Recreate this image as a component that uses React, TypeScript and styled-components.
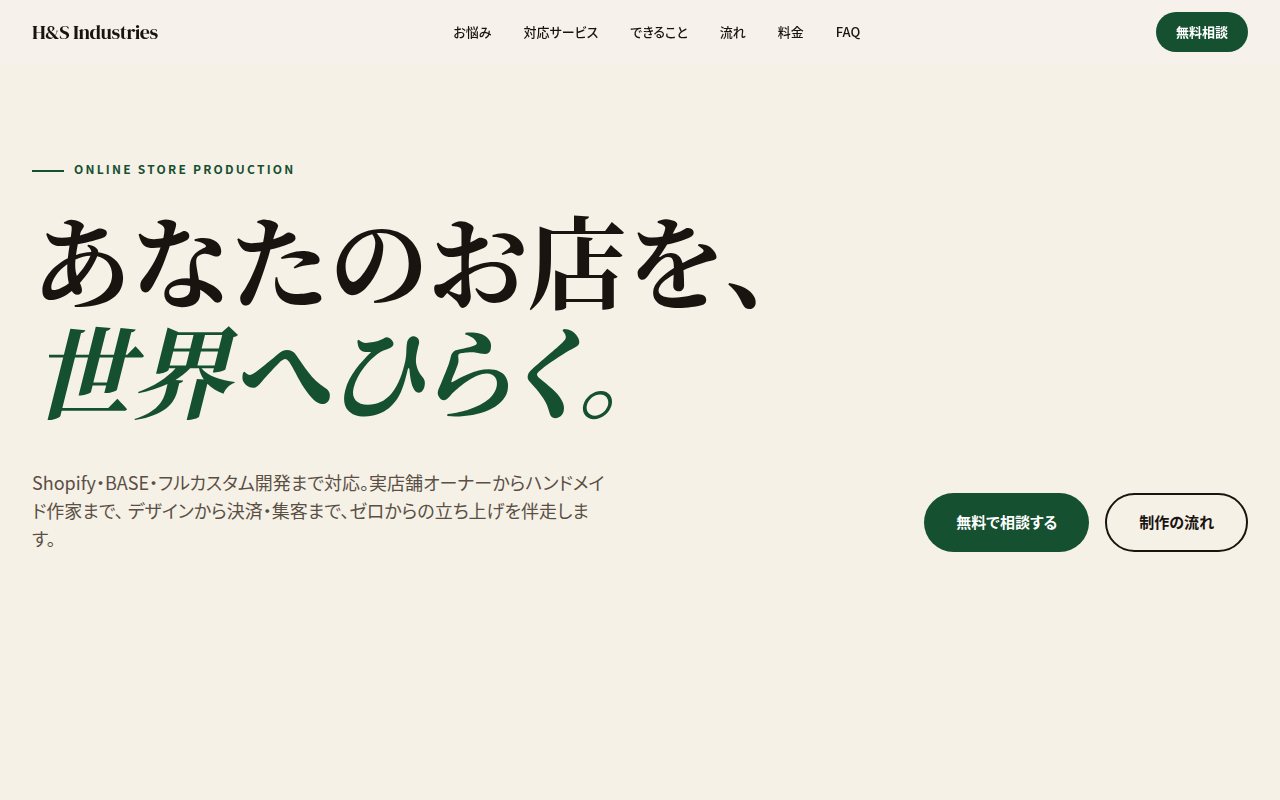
import React from "react";
import styled, { createGlobalStyle } from "styled-components";

const sans = `"Noto Sans CJK JP", sans-serif`;

const GlobalStyle = createGlobalStyle`
  *, *::before, *::after { box-sizing: border-box; }
  body {
    margin: 0;
    background: #f6f1e7;
    color: #1a1410;
    font-family: ${sans};
    font-feature-settings: "palt";
    line-height: 1.6;
  }
  a { color: inherit; text-decoration: none; }
`;

const Header = styled.header`
  position: sticky;
  top: 0;
  z-index: 1;
  display: flex;
  align-items: center;
  justify-content: space-between;
  height: 65px;
  padding: 0 32px;
  border-bottom: 1px solid transparent;
  background: rgba(246, 241, 235, 0.92);
  backdrop-filter: blur(12px);
`;

const Logo = styled.a`
  font-family: "DM Serif Display", "Noto Serif CJK JP", "Liberation Serif", serif;
  font-size: 20px;
  font-weight: 400;
  letter-spacing: -0.025em;
`;

const Nav = styled.nav`
  display: flex;
  gap: 32px;
  font-size: 13px;
  font-weight: 500;
`;

const Button = styled.button<{ $outline?: boolean; $small?: boolean }>`
  font-family: inherit;
  font-feature-settings: inherit;
  font-size: ${(p) => (p.$small ? 13 : 15)}px;
  font-weight: 700;
  line-height: ${(p) => (p.$small ? 20 : 22)}px;
  padding: ${(p) => (p.$small ? "10px 20px" : p.$outline ? "16px 32px 17px" : "18px 32px 19px")};
  border: ${(p) => (p.$outline ? "2px solid #1a1410" : "0")};
  border-radius: 999px;
  background: ${(p) => (p.$outline ? "transparent" : "#155030")};
  color: ${(p) => (p.$outline ? "#1a1410" : "#ffffff")};
  white-space: nowrap;
  cursor: pointer;
`;

const Hero = styled.section`
  padding: 94px 32px 96px;
`;

const Eyebrow = styled.p`
  display: flex;
  align-items: center;
  gap: 10px;
  margin: 0 0 24px;
  color: #155030;
  font-size: 12px;
  font-weight: 700;
  line-height: 20px;
  letter-spacing: 0.185em;

  &::before {
    content: "";
    width: 32px;
    height: 2px;
    margin-top: 3px;
    background: currentColor;
  }
`;

const Title = styled.h1`
  margin: 0 0 45px;
  font-family: "Noto Serif CJK JP", "Noto Serif JP", serif;
  font-size: 100px;
  font-weight: 700;
  font-feature-settings: normal;
  line-height: 110px;
  letter-spacing: -0.01em;
`;

const Accent = styled.em`
  display: block;
  color: #155030;
  font-feature-settings: "palt";
  letter-spacing: -0.015em;
`;

const HeroFoot = styled.div`
  display: flex;
  flex-wrap: wrap;
  align-items: flex-end;
  justify-content: space-between;
  gap: 48px;
`;

const Lead = styled.p`
  max-width: 580px;
  margin: 0;
  color: #5a4f45;
  font-size: 18px;
  line-height: 28px;
`;

const Actions = styled.div`
  display: flex;
  gap: 16px;
`;

const links = ["お悩み", "対応サービス", "できること", "流れ", "料金", "FAQ"];

export default function App() {
  return (
    <>
      <GlobalStyle />
      <Header lang="ja">
        <Logo href="#">H&amp;S Industries</Logo>
        <Nav>
          {links.map((label) => (
            <a key={label} href={`#${label}`}>{label}</a>
          ))}
        </Nav>
        <Button $small>無料相談</Button>
      </Header>
      <main lang="ja">
        <Hero>
          <Eyebrow>ONLINE STORE PRODUCTION</Eyebrow>
          <Title>
            あなたのお店を、
            <Accent>世界へひらく。</Accent>
          </Title>
          <HeroFoot>
            <Lead>
              Shopify・BASE・フルカスタム開発まで対応。実店舗オーナーからハンドメイド作家まで、
              デザインから決済・集客まで、ゼロからの立ち上げを伴走します。
            </Lead>
            <Actions>
              <Button>無料で相談する</Button>
              <Button $outline>制作の流れ</Button>
            </Actions>
          </HeroFoot>
        </Hero>
      </main>
    </>
  );
}
